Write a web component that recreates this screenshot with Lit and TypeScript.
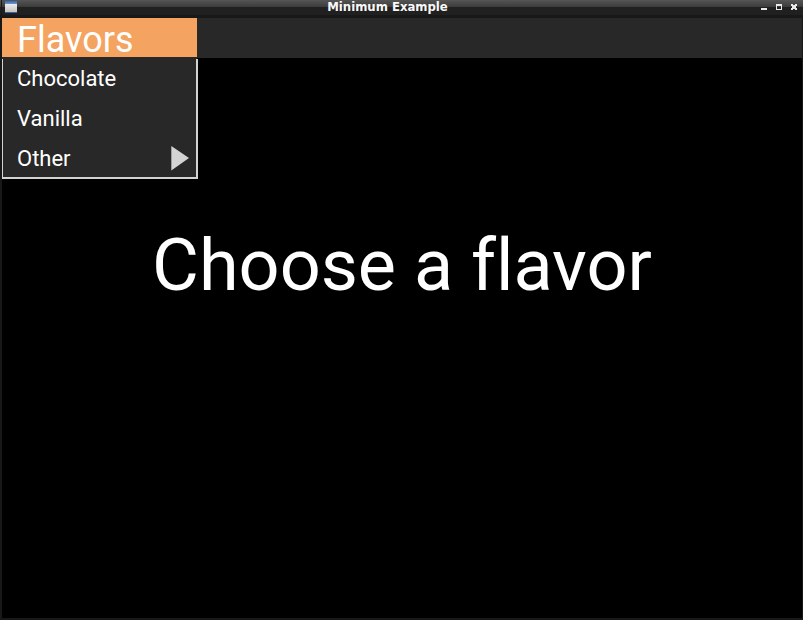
import { LitElement, html, css } from "lit";
import { customElement } from "lit/decorators.js";

@customElement("title-bar")
class TitleBar extends LitElement {
  static styles = css`
    :host {
      display: grid;
      grid-template-columns: 44px 1fr 44px;
      height: 18px;
      box-sizing: border-box;
      background: linear-gradient(#555 0, #3b3b3b 7px, #202020 7px, #202020 15px, #181818 15px, #181818 18px);
    }
    svg { display: block; }
    .title {
      font: bold 11.7px/14px "DejaVu Sans", sans-serif;
      color: #f8f8f8;
      text-align: center;
      padding-right: 28px;
      white-space: nowrap;
    }
  `;
  render() {
    return html`
      <svg width="44" height="18" shape-rendering="crispEdges">
        <defs>
          <linearGradient id="cap" x1="0" y1="0" x2="0" y2="1">
            <stop offset="0" stop-color="#3a66a8" />
            <stop offset="1" stop-color="#6898d4" />
          </linearGradient>
          <linearGradient id="pane" x1="0" y1="0" x2="0" y2="1">
            <stop offset="0" stop-color="#ececec" />
            <stop offset="1" stop-color="#c4c4c4" />
          </linearGradient>
        </defs>
        <rect x="1" width="1" height="16" fill="#181818" />
        <rect x="5" y="1" width="12" height="12" fill="#5478ac" />
        <rect x="5" y="1" width="12" height="3" fill="url(#cap)" />
        <rect x="5" y="4" width="12" height="8" fill="url(#pane)" />
        <rect x="5" y="12" width="12" height="1" fill="#3c62a0" />
      </svg>
      <div class="title">Minimum Example</div>
      <svg width="44" height="18" shape-rendering="crispEdges" fill="#e8e8e4">
        <rect x="2" y="8" width="6" height="2" />
        <path fill-rule="evenodd" d="M17 4h6v6h-6zM18 6v3h4v-3z" />
        <path d="M32 4h2v1h2v-1h2v2h-1v2h1v2h-2v-1h-2v1h-2v-2h1v-2h-1z" />
      </svg>
    `;
  }
}

@customElement("flavor-menu")
class FlavorMenu extends LitElement {
  static styles = css`
    :host {
      display: block;
      height: 40px;
      background: #282828;
      position: relative;
      color: #fff;
      font-family: Roboto, sans-serif;
      font-variant-ligatures: none;
    }
    .button {
      width: 195px;
      height: 39px;
      box-sizing: border-box;
      padding-left: 15px;
      background: #f4a460;
      font-size: 36px;
      line-height: 45px;
      white-space: nowrap;
    }
    .dropdown {
      position: absolute;
      top: 41px;
      left: 0;
      width: 196px;
      height: 120px;
      box-sizing: border-box;
      border: solid #d3d3d3;
      border-width: 0 2px 2px 1px;
      background: #282828;
    }
    .strip {
      width: 195px;
      height: 2px;
      background: #282828;
    }
    .item {
      display: flex;
      align-items: center;
      justify-content: space-between;
      height: 40px;
      padding: 0 7px 0 14px;
      font-size: 22px;
      line-height: 40px;
    }
    .arrow { display: block; position: relative; top: -1px; }
  `;
  render() {
    return html`
      <div class="button">Flavors</div>
      <div class="strip"></div>
      <div class="dropdown">
        <div class="item">Chocolate</div>
        <div class="item">Vanilla</div>
        <div class="item">
          Other
          <svg class="arrow" width="18" height="26"><path d="M0.300 1L18 13L0.300 25.500z" fill="#d3d3d3" /></svg>
        </div>
      </div>
    `;
  }
}

@customElement("app-root")
class AppRoot extends LitElement {
  static styles = css`
    :host {
      display: flex;
      flex-direction: column;
      width: 803px;
      height: 620px;
      overflow: hidden;
      background: #181818;
    }
    .client {
      flex: 1;
      margin: 0 1px 2px 2px;
      background: #000;
    }
    .message {
      padding-top: 164px;
      text-align: center;
      color: #fff;
      font: 72px/88px Roboto, sans-serif;
      font-variant-ligatures: none;
      white-space: nowrap;
    }
  `;
  render() {
    return html`
      <title-bar></title-bar>
      <div class="client">
        <flavor-menu></flavor-menu>
        <div class="message">Choose a flavor</div>
      </div>
    `;
  }
}
